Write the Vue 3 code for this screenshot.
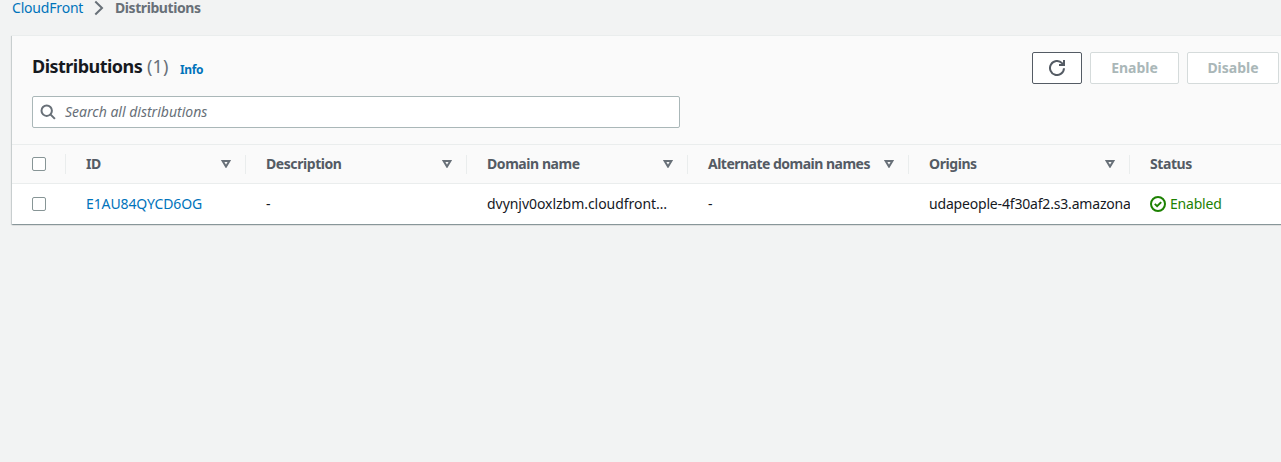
<script setup>
const columns = [
  { name: 'ID', key: 'id' },
  { name: 'Description', key: 'description' },
  { name: 'Domain name', key: 'domain' },
  { name: 'Alternate domain names', key: 'alternate' },
  { name: 'Origins', key: 'origins' },
]
const row = {
  id: 'E1AU84QYCD6OG',
  description: '-',
  domain: 'dvynjv0oxlzbm.cloudfront…',
  alternate: '-',
  origins: 'udapeople-4f30af2.s3.amazona',
}
</script>

<template>
  <div class="page">
    <nav class="crumbs">
      <a class="crumb-link">CloudFront</a>
      <svg class="chevron" width="10" height="16" viewBox="0 0 10 16"><path d="M1.3 1.5 8 8 1.3 14.5" /></svg>
      <span class="crumb-current">Distributions</span>
    </nav>

    <section class="panel">
      <header class="panel-head">
        <div class="title-row">
          <h1>Distributions</h1>
          <span class="count">(1)</span>
          <a class="info">Info</a>
          <div class="actions">
            <button class="btn refresh" aria-label="Refresh">
              <svg width="16" height="16" viewBox="0 0 16 16"><path d="M15 8.2a7 7 0 1 1-2-5.1l1.7 1.9M15 0v5h-5" /></svg>
            </button>
            <button class="btn enable" disabled>Enable</button>
            <button class="btn disable" disabled>Disable</button>
          </div>
        </div>
        <div class="search">
          <svg width="16" height="16" viewBox="0 0 16 16"><circle cx="6.7" cy="6.7" r="5.2" /><path d="m10.4 10.4 4.5 4.5" /></svg>
          <span>Search all distributions</span>
        </div>
      </header>

      <div class="grid thead">
        <div class="check"><i class="box"></i></div>
        <div v-for="c in columns" :key="c.key" class="th">
          <span :class="{ tight: c.key === 'alternate' }">{{ c.name }}</span>
          <svg width="10" height="8" viewBox="0 0 10 8"><path d="M1.6 1h6.8L5 6.6z" /></svg>
        </div>
        <div class="th"><span>Status</span></div>
      </div>

      <div class="grid tbody">
        <div class="check"><i class="box"></i></div>
        <div v-for="c in columns" :key="c.key" class="td" :class="c.key">{{ row[c.key] }}</div>
        <div class="td status">
          <svg width="16" height="16" viewBox="0 0 16 16"><circle cx="8" cy="8" r="7" /><path d="m4.8 7.9 2.3 2.3 4.1-4.1" /></svg>
          <span>Enabled</span>
        </div>
      </div>
    </section>
  </div>
</template>

<style>
html, body { background: #f2f3f3; }
</style>

<style scoped>
* { box-sizing: border-box; }
.page {
  width: 100%;
  height: 462px;
  overflow: hidden;
  background: #f2f3f3;
  color: #16191f;
  font: 14px/22px "Noto Sans", "Open Sans", sans-serif;
}
svg { fill: none; stroke: currentColor; stroke-width: 2; flex: none; display: block; }
.crumbs { display: flex; align-items: center; height: 16px; padding-left: 12px; line-height: 16px; }
.crumb-link { width: 82px; color: #0073bb; letter-spacing: -0.19px; }
.chevron { width: 10px; margin-right: 11px; color: #687078; }
.crumb-current { color: #687078; font-weight: 700; letter-spacing: -0.43px; }
.panel {
  width: 1300px;
  margin: 19px 0 0 12px;
  background: #fff;
  box-shadow: 0 1px 1px 0 rgba(0, 28, 36, .25), 1px 1px 1px 0 rgba(0, 28, 36, .13), -1px 1px 1px 0 rgba(0, 28, 36, .13);
}
.panel-head { height: 110px; padding: 16px 0 0 20px; background: #fafafa; border-top: 1px solid #eaeded; border-bottom: 1px solid #eaeded; }
.title-row { display: flex; width: 1247px; height: 32px; align-items: baseline; }
h1 { width: 115px; margin: 0; font-size: 18px; line-height: 28px; letter-spacing: -0.53px; white-space: nowrap; }
.count { width: 33px; font-size: 18px; line-height: 28px; color: #687078; letter-spacing: .2px; }
.info { position: relative; top: 1px; color: #0073bb; font-size: 12px; font-weight: 700; letter-spacing: -0.35px; }
.actions { display: flex; gap: 8px; margin-left: auto; align-self: flex-start; }
.btn { display: flex; align-items: center; justify-content: center; height: 32px; padding: 0 0 1px; border: 1px solid #d5dbdb; border-radius: 2px; background: #fff; color: #aab7b8; font: 700 14px/22px "Noto Sans", sans-serif; }
.refresh { width: 50px; padding: 0; border-color: #545b64; color: #545b64; }
.enable { width: 89px; }
.disable { width: 92px; }
.search { display: flex; align-items: center; gap: 9px; width: 648px; height: 32px; margin-top: 12px; padding-left: 7px; border: 1px solid #aab7b8; border-radius: 2px; background: #fff; color: #687078; }
.search span { font-style: italic; }
.grid { display: grid; grid-template-columns: 54px 180px repeat(4, 221px) 1fr; align-items: center; }
.thead { height: 39px; background: #fafafa; border-bottom: 1px solid #eaeded; color: #545b64; font-weight: 700; letter-spacing: -0.43px; }
.tight { letter-spacing: -0.51px; }
.tbody { height: 40px; }
.check { display: flex; align-items: center; height: 20px; padding-left: 20px; border-right: 1px solid transparent; }
.thead .check { border-color: #eaeded; }
.box { width: 14px; height: 14px; border: 1px solid #879596; border-radius: 2px; background: #fff; }
.th { display: flex; align-items: center; justify-content: space-between; height: 19px; padding: 0 14px 0 20px; border-right: 1px solid #eaeded; white-space: nowrap; }
.th svg { color: #687078; }
.td { padding-left: 20px; overflow: hidden; white-space: nowrap; }
.id { color: #0073bb; letter-spacing: -0.12px; }
.domain { letter-spacing: -0.04px; }
.origins { letter-spacing: -0.18px; }
.status { display: flex; align-items: center; gap: 4px; color: #1d8102; letter-spacing: -0.2px; }
</style>
